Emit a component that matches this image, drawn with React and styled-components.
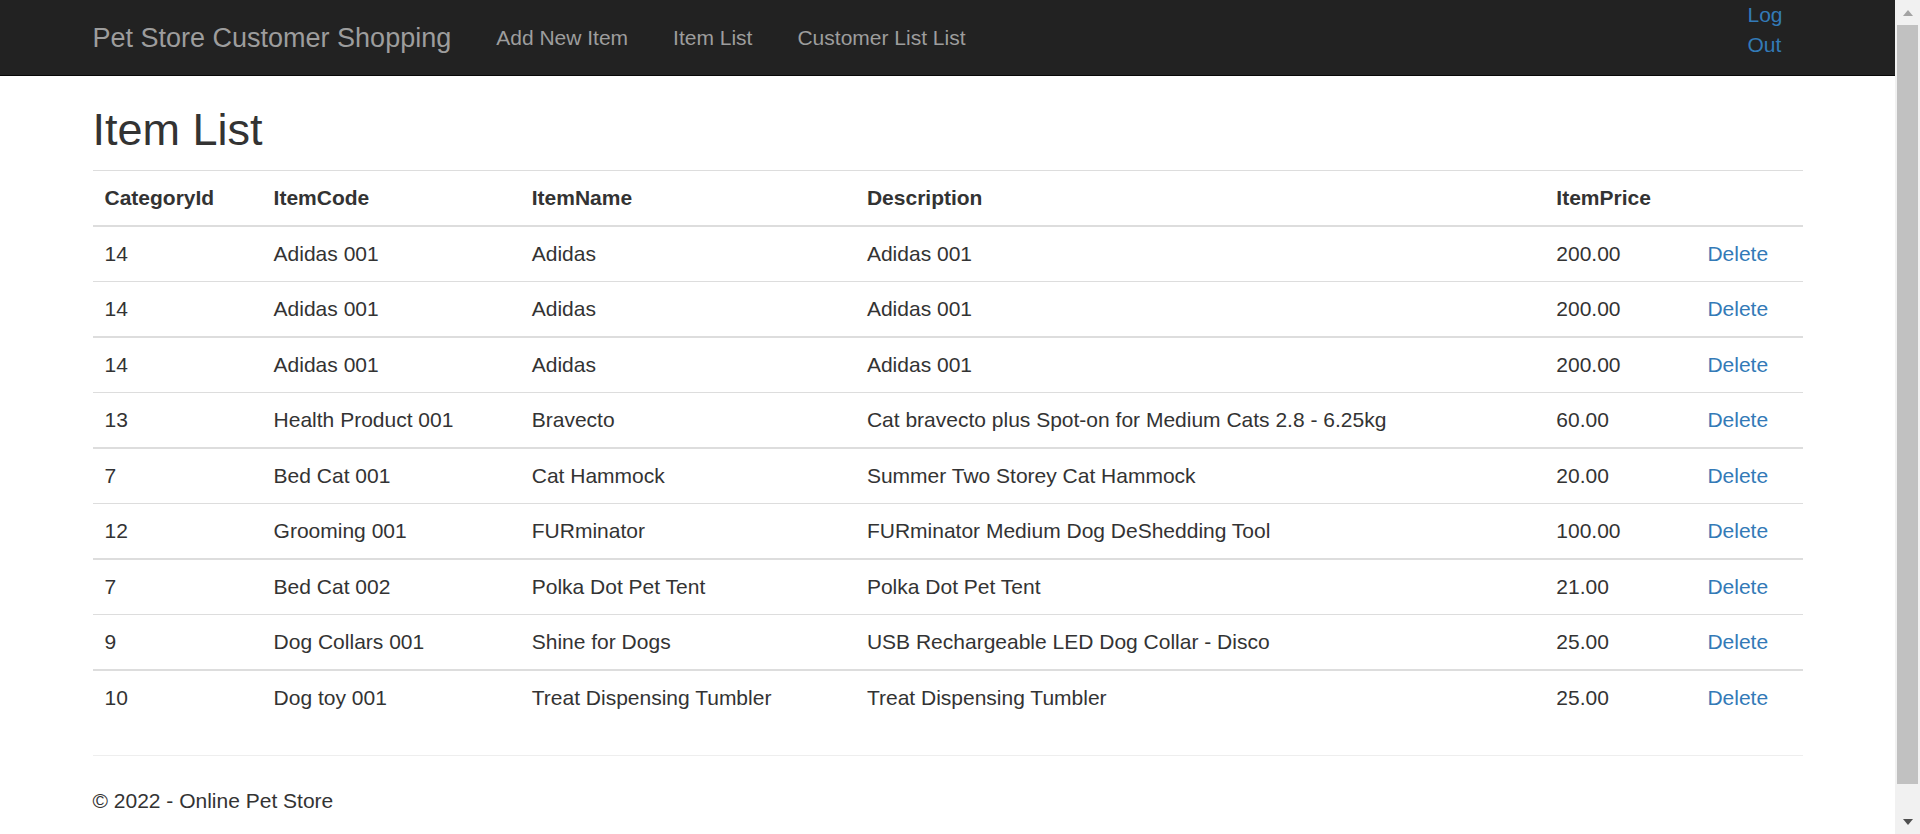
import React from 'react'
import styled, { createGlobalStyle } from 'styled-components'

const items = [
  { categoryId: 14, code: 'Adidas 001', name: 'Adidas', description: 'Adidas 001', price: '200.00' },
  { categoryId: 14, code: 'Adidas 001', name: 'Adidas', description: 'Adidas 001', price: '200.00' },
  { categoryId: 14, code: 'Adidas 001', name: 'Adidas', description: 'Adidas 001', price: '200.00' },
  { categoryId: 13, code: 'Health Product 001', name: 'Bravecto', description: 'Cat bravecto plus Spot-on for Medium Cats 2.8 - 6.25kg', price: '60.00' },
  { categoryId: 7, code: 'Bed Cat 001', name: 'Cat Hammock', description: 'Summer Two Storey Cat Hammock', price: '20.00' },
  { categoryId: 12, code: 'Grooming 001', name: 'FURminator', description: 'FURminator Medium Dog DeShedding Tool', price: '100.00' },
  { categoryId: 7, code: 'Bed Cat 002', name: 'Polka Dot Pet Tent', description: 'Polka Dot Pet Tent', price: '21.00' },
  { categoryId: 9, code: 'Dog Collars 001', name: 'Shine for Dogs', description: 'USB Rechargeable LED Dog Collar - Disco', price: '25.00' },
  { categoryId: 10, code: 'Dog toy 001', name: 'Treat Dispensing Tumbler', description: 'Treat Dispensing Tumbler', price: '25.00' },
]

const columns = [169, 258, 335, 689, 151, 107]

const App = () => {
  return (
    <Frame>
      <GlobalStyle />
      <Viewport>
        <Navbar>
          <NavContainer>
            <Brand href="#">Pet Store Customer Shopping</Brand>
            <NavList>
              <NavLink href="#">Add New Item</NavLink>
              <NavLink href="#">Item List</NavLink>
              <NavLink href="#">Customer List List</NavLink>
            </NavList>
            <LogOut href="#">Log Out</LogOut>
          </NavContainer>
        </Navbar>
        <Container>
          <Title>Item List</Title>
          <Table>
            <colgroup>
              {columns.map((w, i) => <col key={i} style={{ width: w }} />)}
            </colgroup>
            <tbody>
              <Row>
                <HeadCell>CategoryId</HeadCell>
                <HeadCell>ItemCode</HeadCell>
                <HeadCell>ItemName</HeadCell>
                <HeadCell>Description</HeadCell>
                <HeadCell>ItemPrice</HeadCell>
                <HeadCell></HeadCell>
              </Row>
              {items.map((item, i) => (
                <Row key={i} $thick={i % 2 === 0}>
                  <Cell>{item.categoryId}</Cell>
                  <Cell>{item.code}</Cell>
                  <Cell>{item.name}</Cell>
                  <Cell>{item.description}</Cell>
                  <Cell>{item.price}</Cell>
                  <Cell><DeleteLink href="#">Delete</DeleteLink></Cell>
                </Row>
              ))}
            </tbody>
          </Table>
          <Rule />
          <Footer>
            <p>© 2022 - Online Pet Store</p>
          </Footer>
        </Container>
      </Viewport>
      <ScrollTrack>
        <ArrowButton><ArrowUp /></ArrowButton>
        <Thumb />
        <ArrowButton $bottom><ArrowDown /></ArrowButton>
      </ScrollTrack>
    </Frame>
  )
}

const GlobalStyle = createGlobalStyle`
  * { box-sizing: border-box; }
  html, body { margin: 0; padding: 0; overflow: hidden; }
  body {
    font-family: "Liberation Sans", Arial, Helvetica, sans-serif;
    font-size: 21px;
    line-height: 30px;
    color: #333;
    background: #fff;
  }
`

const Frame = styled.div`
  display: flex;
  height: 100vh;
  overflow: hidden;
`

const Viewport = styled.div`
  flex: 1;
  min-width: 0;
  overflow: hidden;
`

const Navbar = styled.nav`
  background: #222;
  border-bottom: 1px solid #080808;
  height: 76px;
`

const NavContainer = styled.div`
  width: 1755px;
  margin: 0 auto;
  padding: 0 22.5px;
  display: flex;
  align-items: flex-start;
`

const Brand = styled.a`
  margin-left: -22.5px;
  padding: 22.5px;
  height: 75px;
  font-size: 27px;
  line-height: 30px;
  color: #9d9d9d;
  text-decoration: none;
`

const NavList = styled.div`
  display: flex;
`

const NavLink = styled.a`
  padding: 22.5px;
  font-size: 21px;
  line-height: 30px;
  color: #9d9d9d;
  text-decoration: none;
`

const LogOut = styled.a`
  margin-left: auto;
  margin-right: 20px;
  width: min-content;
  color: #337ab7;
  text-decoration: none;
  line-height: 30px;
`

const Container = styled.main`
  width: 1755px;
  margin: 0 auto;
  padding: 0 22.5px;
`

const Title = styled.h2`
  margin: 29px 0 15px;
  font-size: 45px;
  font-weight: 500;
  line-height: 49.5px;
`

const Table = styled.table`
  width: 100%;
  table-layout: fixed;
  border-collapse: separate;
  border-spacing: 0;
  margin-bottom: 30px;
`

const Row = styled.tr`
  & > td, & > th {
    border-top: ${p => (p.$thick ? '2px' : '1px')} solid #ddd;
  }
`

const Cell = styled.td`
  padding: 12px;
  line-height: 30px;
  vertical-align: top;
  text-align: left;
  white-space: nowrap;
`

const HeadCell = styled(Cell).attrs({ as: 'th' })`
  font-weight: bold;
`

const DeleteLink = styled.a`
  color: #337ab7;
  text-decoration: none;
`

const Rule = styled.hr`
  margin: 30px 0;
  border: 0;
  border-top: 1px solid #eee;
`

const Footer = styled.footer`
  p { margin: 0 0 15px; }
`

const ScrollTrack = styled.div`
  width: 25px;
  flex: none;
  background: #f1f1f1;
  display: flex;
  flex-direction: column;
`

const ArrowButton = styled.div`
  height: 25px;
  flex: none;
  display: flex;
  justify-content: center;
  align-items: center;
  margin-top: ${p => (p.$bottom ? 'auto' : '0')};
`

const ArrowUp = styled.span`
  width: 0;
  height: 0;
  border-left: 5.5px solid transparent;
  border-right: 5.5px solid transparent;
  border-bottom: 6px solid #a3a3a3;
`

const ArrowDown = styled.span`
  width: 0;
  height: 0;
  border-left: 5.5px solid transparent;
  border-right: 5.5px solid transparent;
  border-top: 6px solid #505050;
`

const Thumb = styled.div`
  height: 759px;
  flex: none;
  margin: 0 2px;
  background: #c1c1c1;
`

export default App
